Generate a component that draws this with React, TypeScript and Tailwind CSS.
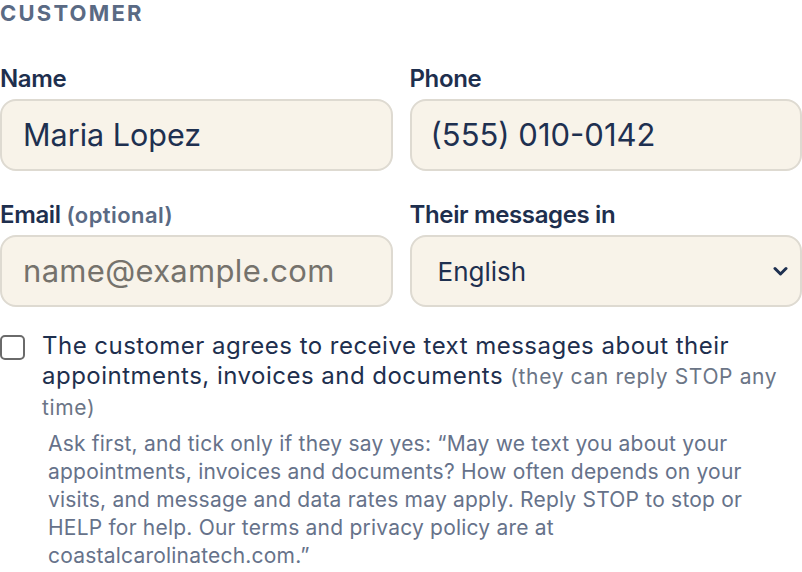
import React from "react";

export default function App() {
  return (
    <div className="w-[802px] h-[572px] overflow-hidden bg-white" style={{ fontFamily: "Inter, 'Noto Sans', sans-serif" }}>
      <div className="text-[22px] leading-[27px] font-bold tracking-[0.1em] text-[#5a6a84] uppercase">Customer</div>
      <div className="mt-[38px] grid grid-cols-2 gap-x-[17px] gap-y-[30px]">
        <div className="flex flex-col">
          <label className="text-[24px] leading-[28px] font-semibold text-[#1e2f4e] tracking-[-0.015em]">Name</label>
          <div className="mt-[6px] h-[72px] rounded-[16px] border-2 border-[#dedad1] bg-[#f8f3e9] flex items-center px-[21px]">
            <span className="text-[30.5px] text-[#1e3050]">Maria Lopez</span>
          </div>
        </div>
        <div className="flex flex-col">
          <label className="text-[24px] leading-[28px] font-semibold text-[#1e2f4e] tracking-[-0.015em]">Phone</label>
          <div className="mt-[6px] h-[72px] rounded-[16px] border-2 border-[#dedad1] bg-[#f8f3e9] flex items-center px-[19px]">
            <span className="text-[31px] text-[#1e3050]">(555) 010-0142</span>
          </div>
        </div>
        <div className="flex flex-col">
          <label className="text-[24px] leading-[28px] font-semibold text-[#1e2f4e] tracking-[-0.015em]">
            Email <span className="text-[22px] text-[#5a6a84] font-semibold tracking-[0.02em]">(optional)</span>
          </label>
          <div className="mt-[6px] h-[72px] rounded-[16px] border-2 border-[#dedad1] bg-[#f8f3e9] flex items-center px-[21px]">
            <span className="text-[31px] tracking-[0.01em] text-[#75726c]">name@example.com</span>
          </div>
        </div>
        <div className="flex flex-col">
          <label className="text-[24px] leading-[28px] font-semibold text-[#1e2f4e] tracking-[-0.015em]">Their messages in</label>
          <div className="mt-[6px] h-[72px] rounded-[16px] border-2 border-[#dedad1] bg-[#f8f3e9] flex items-center justify-between pl-[26px] pr-[12px]">
            <span className="text-[26px] text-[#1e3050]">English</span>
            <svg width="15" height="12" viewBox="0 0 15 12" fill="none">
              <path d="M2 3.5 L7.5 9 L13 3.5" stroke="#1e3050" strokeWidth="3" strokeLinecap="round" strokeLinejoin="round" />
            </svg>
          </div>
        </div>
      </div>
      <div className="mt-[28px] flex items-start gap-[17px]">
        <div className="w-[25px] h-[25px] shrink-0 rounded-[5px] border-2 border-[#6a6a6a] bg-white" />
        <div className="-mt-[4px] flex flex-col">
          <p className="text-[24px] leading-[30px] text-[#1e2f4e] tracking-[0.02em]">
            The customer agrees to receive text messages about their appointments, invoices and documents{" "}
            <span className="text-[21px] leading-[30px] text-[#6b7586] tracking-[0.03em]">(they can reply STOP any time)</span>
          </p>
          <p className="mt-[7px] ml-[6px] text-[21px] leading-[28px] text-[#66728a] tracking-[0.01em]">
            Ask first, and tick only if they say yes: “May we text you about your appointments, invoices and documents? How often depends on your visits, and message and data rates may apply. Reply STOP to stop or HELP for help. Our terms and privacy policy are at coastalcarolinatech.com.”
          </p>
        </div>
      </div>
    </div>
  );
}
